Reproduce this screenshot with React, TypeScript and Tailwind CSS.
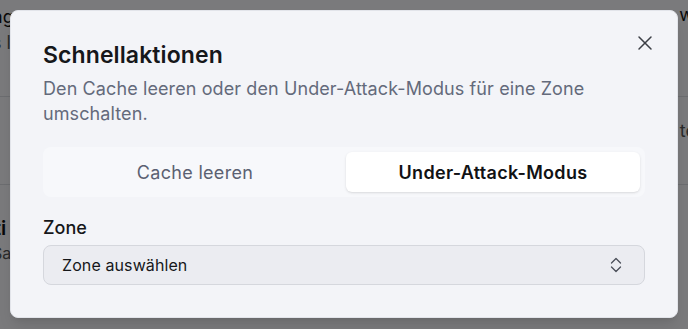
import React from 'react';
import { X } from 'lucide-react';

export default function App() {
  return (
    <div className="relative h-[329px] w-[688px] overflow-hidden bg-[#f4f5f8] font-['Inter',sans-serif]">
      {/* page behind the dialog, only its edges peek out */}
      <div className="flex flex-col">
        <div className="flex h-[97px] justify-between border-b border-[#d9dbe0]">
          <div className="-ml-[8px] pt-[4px]">
            <div className="text-[18px] leading-[26px] text-[#111]">ng</div>
            <div className="text-[18px] leading-[26px] text-[#555]">s l</div>
          </div>
          <div className="-mr-[6px] pt-[2px] text-[18px] leading-[26px] text-[#111]">w</div>
        </div>
        <div className="flex h-[88px] justify-end border-b border-[#d9dbe0] pt-[20px]">
          <div className="-mr-[8px] text-[18px] text-[#555]">te</div>
        </div>
        <div className="-ml-[6px] pt-[30px] text-[20px] font-semibold leading-[26px] text-[#111]">ti</div>
        <div className="-ml-[8px] text-[16px] leading-[24px] text-[#555]">Sa</div>
      </div>
      <div className="absolute inset-0 bg-black/50" />

      <div className="absolute left-[10px] top-[10px] flex h-[308px] w-[668px] flex-col rounded-lg border border-[#e2e4ea] bg-[#f3f4f8] px-8 pt-[28px] shadow-lg">
        <button className="absolute right-[20px] top-[20px] text-[#3c3f46]">
          <X size={24} strokeWidth={1.5} />
        </button>
        <h2 className="text-[23px] font-semibold leading-[32px] tracking-[0.1px] text-[#16171a]">Schnellaktionen</h2>
        <p className="mt-[5px] text-[18px] leading-[25px] tracking-[0.1px] text-[#646a7b]">
          Den Cache leeren oder den Under-Attack-Modus für eine Zone umschalten.
        </p>
        <div className="mt-[21px] flex h-[50px] items-center gap-1 rounded-lg bg-[#f7f8fb] p-[5px]">
          <div className="flex h-full flex-1 items-center justify-center rounded-md text-[18px] tracking-[0.3px] text-[#5b6172]">
            Cache leeren
          </div>
          <div className="flex h-full flex-1 items-center justify-center rounded-md bg-white text-[18px] font-semibold tracking-[0.3px] text-[#111214] shadow-sm">
            Under-Attack-Modus
          </div>
        </div>
        <label className="mt-[18px] text-[18px] font-medium leading-[26px] text-[#16171a]">Zone</label>
        <div className="mt-[4px] flex h-[40px] items-center justify-between rounded-lg border border-[#d5d7dd] bg-[#ebecf1] pl-[18px] pr-[22px]">
          <span className="text-[16px] tracking-[0.1px] text-[#16171a]">Zone auswählen</span>
          <svg width="12" height="16" viewBox="0 0 12 16" fill="none" stroke="#4b4f59" strokeWidth="1.3" strokeLinecap="round" strokeLinejoin="round">
            <path d="M1.5 6 L6 1.5 L10.5 6" />
            <path d="M1.5 10 L6 14.5 L10.5 10" />
          </svg>
        </div>
      </div>
    </div>
  );
}
